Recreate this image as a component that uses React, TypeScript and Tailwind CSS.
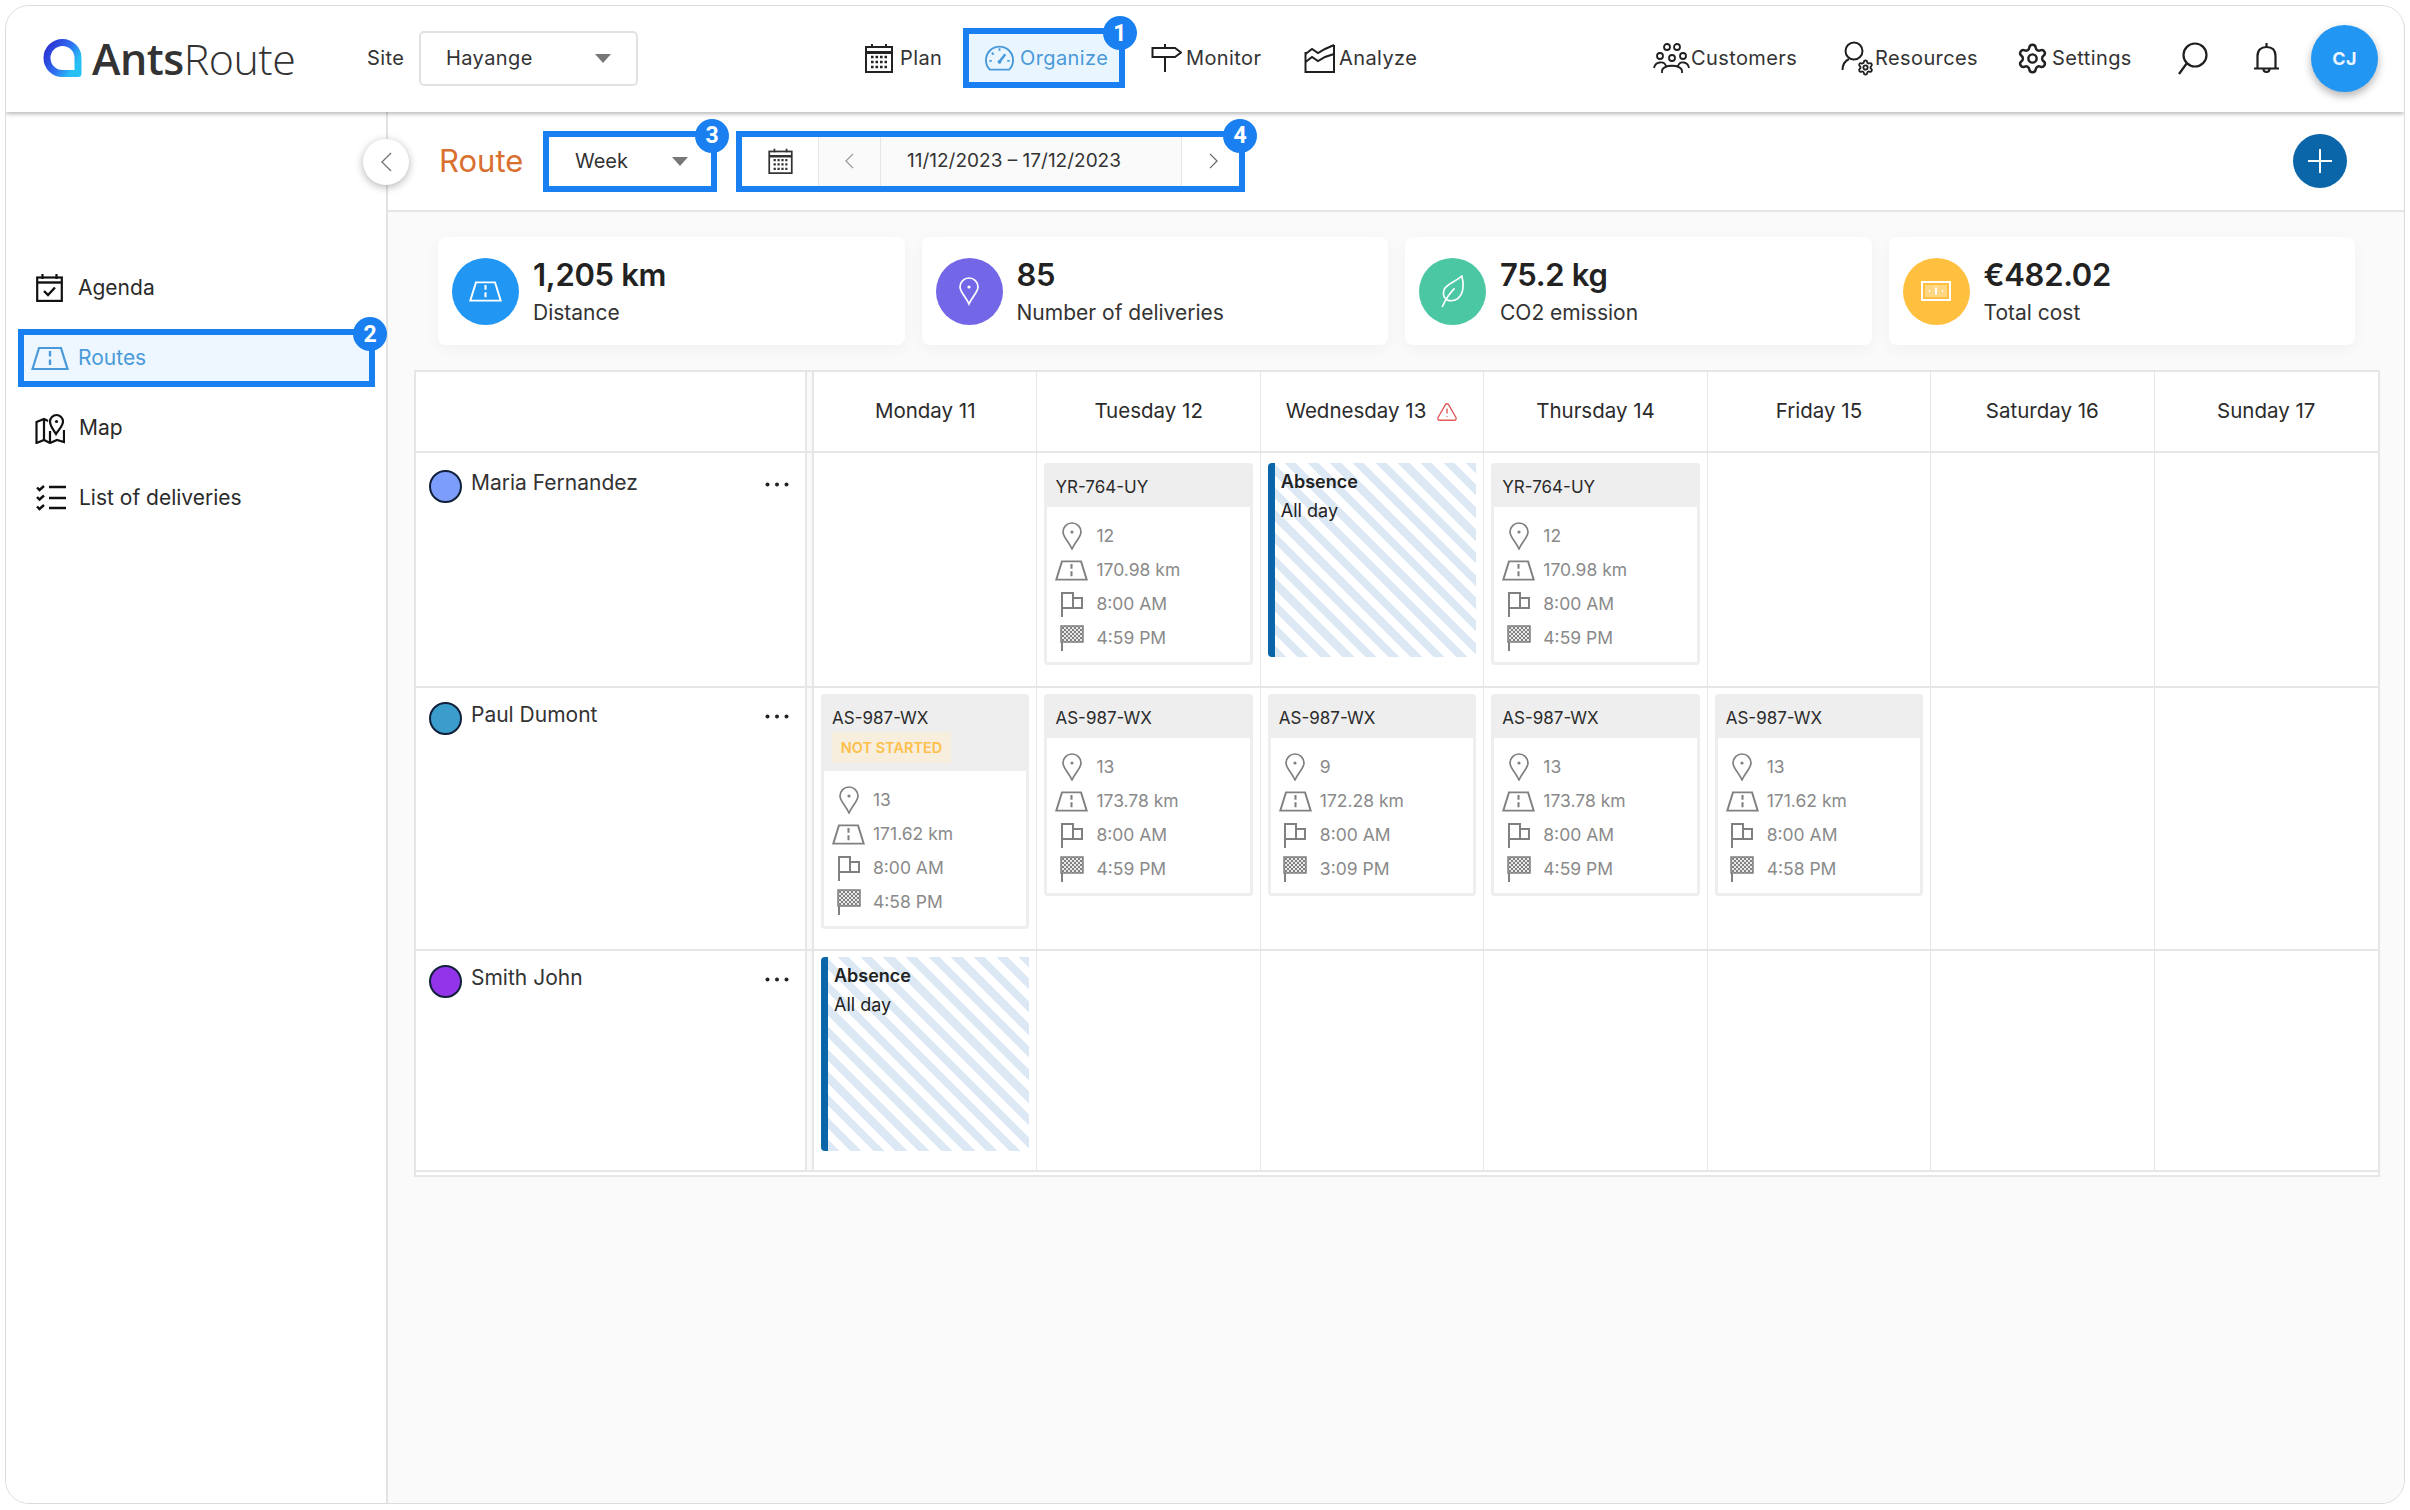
import React from 'react';
import { Settings, TriangleAlert } from 'lucide-react';

// ── small drawn icons ─────────────────────────────────────────────────────────
type IconProps = { className?: string };

const Road = ({ className }: IconProps) => (
  <svg viewBox="0 0 38 24" fill="none" stroke="currentColor" strokeWidth="2.2" className={className}>
    <path d="M1.5 22.5 L8 1.5 H30 L36.5 22.5 Z" />
    <path d="M19 4.5 V10 M19 13 V18.5" strokeWidth="2.4" />
  </svg>
);

const Pin = ({ className }: IconProps) => (
  <svg viewBox="0 0 20 28" fill="none" stroke="currentColor" strokeWidth="1.7" className={className}>
    <path d="M10 27 C7 20 1 15 1 10 A9 9 0 0 1 19 10 C19 15 13 20 10 27 Z" />
    <circle cx="10" cy="10" r="1.6" fill="currentColor" stroke="none" />
  </svg>
);

const StartFlag = ({ className }: IconProps) => (
  <svg viewBox="0 0 24 26" fill="none" stroke="currentColor" strokeWidth="2" className={className}>
    <path d="M2 26 V2 H13 V17 H2" />
    <path d="M13 7 H22 V17 H13" />
  </svg>
);

const FinishFlag = ({ className }: IconProps) => (
  <svg viewBox="0 0 24 26" className={className}>
    <defs>
      <pattern id="chk" width="4" height="4" patternUnits="userSpaceOnUse">
        <rect width="4" height="4" fill="#e9e9e9" />
        <rect width="2" height="2" fill="#808080" />
        <rect x="2" y="2" width="2" height="2" fill="#808080" />
      </pattern>
    </defs>
    <path d="M2 26 V1" stroke="currentColor" strokeWidth="2" />
    <rect x="1" y="1" width="22" height="16" fill="url(#chk)" stroke="currentColor" strokeWidth="1.5" />
  </svg>
);

const CalendarGrid = ({ className }: IconProps) => (
  <svg viewBox="0 0 28 30" fill="none" stroke="currentColor" strokeWidth="2" className={className}>
    <rect x="1" y="4" width="26" height="25" />
    <path d="M1 9.5 H27" strokeWidth="3" />
    <path d="M7 1 V5 M21 1 V5" />
    <path d="M6 14 H22 M6 19 H22 M6 24 H22" strokeWidth="2.6" strokeDasharray="2.6 1.9" />
  </svg>
);

const Gauge = ({ className }: IconProps) => (
  <svg viewBox="0 0 30 30" fill="none" stroke="currentColor" strokeWidth="2" className={className}>
    <path d="M5 27 A14 14 0 1 1 25 27 Z" />
    <path d="M15 19 L21 11" strokeWidth="2.6" />
    <circle cx="15" cy="19" r="2" fill="currentColor" stroke="none" />
    <path d="M15 5 V7.5 M7 9.5 L9 11.5 M4.5 18 H7 M25.5 18 H23" />
  </svg>
);

const Signpost = ({ className }: IconProps) => (
  <svg viewBox="0 0 31 28" fill="none" stroke="#1f1f1f" strokeWidth="2" className={className}>
    <path d="M1.5 4 H24 L30 8.5 L24 13 H1.5 Z" />
    <path d="M14 0 V4 M14 13 V28" />
  </svg>
);

const ChartBox = ({ className }: IconProps) => (
  <svg viewBox="0 0 31 30" fill="none" stroke="#1f1f1f" strokeWidth="2" className={className}>
    <path d="M1.5 9 V29 H30 V2" />
    <path d="M1.5 11 L8 6 L14 10 L21 6 L30 2" />
    <path d="M1.5 19 L8 14 L14 18 L21 14 L30 11" />
  </svg>
);

const People = ({ className }: IconProps) => (
  <svg viewBox="0 0 37 30" fill="none" stroke="#1f1f1f" strokeWidth="1.8" className={className}>
    <circle cx="14" cy="4" r="3" />
    <circle cx="24" cy="4" r="3" />
    <circle cx="7" cy="13" r="3" />
    <circle cx="19" cy="15" r="3" />
    <circle cx="30" cy="13" r="3" />
    <path d="M1 25 C2 19 11 17 13 23 M9 30 V28 C9 21 29 21 29 28 V30 M25 23 C27 17 35 19 36 25" />
  </svg>
);

const Person = ({ className }: IconProps) => (
  <svg viewBox="0 0 26 30" fill="none" stroke="#1f1f1f" strokeWidth="2" className={className}>
    <circle cx="13" cy="10" r="8.5" />
    <path d="M8 18 C4 20 1.5 24 1.5 29" />
  </svg>
);

const Loupe = ({ className }: IconProps) => (
  <svg viewBox="0 0 30 33" fill="none" stroke="#1f1f1f" strokeWidth="2.2" className={className}>
    <circle cx="17" cy="13" r="11.5" />
    <path d="M9 21 L1 32" />
  </svg>
);

const BellLine = ({ className }: IconProps) => (
  <svg viewBox="0 0 27 33" fill="none" stroke="#1f1f1f" strokeWidth="2.2" className={className}>
    <path d="M4.5 26 V14 C4.5 8 8 5 13.5 5 C19 5 22.5 8 22.5 14 V26 M1 26.5 H26" />
    <path d="M13.5 1 V5" />
    <path d="M10.5 27 A3 3 0 0 0 16.5 27" />
  </svg>
);

const AgendaIcon = ({ className }: IconProps) => (
  <svg viewBox="0 0 27 28" fill="none" stroke="#111" strokeWidth="2.2" className={className}>
    <rect x="1.2" y="3.5" width="24.6" height="23.4" />
    <path d="M1 8.5 H26" strokeWidth="2.4" />
    <path d="M6.5 0 V5 M20.5 0 V5" />
    <path d="M8 17 L12 21 L19 13.5" strokeWidth="2.4" />
  </svg>
);

const MapIcon = ({ className }: IconProps) => (
  <svg viewBox="0 0 30 31" fill="none" stroke="#111" strokeWidth="2.2" className={className}>
    <path d="M13 8 L9 6 L1.5 9 V30 L9 27 L15 30 L22 27 L29 29 V17" />
    <path d="M9 6 V27 M15 18 V30" />
    <path d="M21 21 C18 16 15 13 15 8.5 A6.5 6.5 0 0 1 28 8.5 C28 13 24 16 21 21 Z" />
    <circle cx="21.5" cy="8.5" r="1.6" fill="#111" stroke="none" />
  </svg>
);

const ChecklistIcon = ({ className }: IconProps) => (
  <svg viewBox="0 0 30 26" fill="none" stroke="#111" strokeWidth="2.4" className={className}>
    <path d="M1 2.5 L3.5 5 L8 1 M1 12 L3.5 14.5 L8 10.5 M1 21.5 L3.5 24 L8 20" />
    <path d="M13 2 H30 M13 13 H30 M13 23 H30" />
  </svg>
);

const Leaf = ({ className }: IconProps) => (
  <svg viewBox="0 0 24 32" fill="none" stroke="#fff" strokeWidth="1.6" className={className}>
    <path d="M21 1 C24 12 22 24 11 25 C4 25 2 19 4 14 C7 8 15 7 21 1 Z" />
    <path d="M2 31 C5 24 9 18 14 13" />
  </svg>
);

const Banknote = ({ className }: IconProps) => (
  <svg viewBox="0 0 30 20" fill="none" stroke="#fff" strokeWidth="2" className={className}>
    <rect x="1" y="1" width="28" height="18" />
    <rect x="4" y="4" width="22" height="12" fill="#fff" fillOpacity="0.35" strokeWidth="0" />
    <path d="M15 6.5 V13.5" strokeWidth="2" />
    <path d="M8 10 H9 M21 10 H22" />
  </svg>
);

const Caret = () => (
  <span className="h-0 w-0 border-x-[8px] border-t-[9px] border-x-transparent border-t-[#777]" />
);

const Badge = ({ n }: { n: number }) => (
  <span className="absolute -right-[18px] -top-[18px] flex h-[34px] w-[34px] items-center justify-center rounded-full bg-[#1a7ff0] font-['Roboto'] text-[23px] font-bold leading-none text-white">
    {n}
  </span>
);

const Logo = () => (
  <svg viewBox="0 0 39 38" className="h-[38px] w-[39px] shrink-0" fill="none">
    <defs>
      <linearGradient id="logo" x1="0" y1="0" x2="1" y2="0.6">
        <stop offset="0" stopColor="#2b2bd0" />
        <stop offset="0.6" stopColor="#2f6ff0" />
        <stop offset="1" stopColor="#27c0f5" />
      </linearGradient>
    </defs>
    <path d="M35 34.5 H19.5 A15.5 15.5 0 1 1 35 19 Z" stroke="url(#logo)" strokeWidth="7" strokeLinejoin="round" />
  </svg>
);

// ── top bar ───────────────────────────────────────────────────────────────────
const TopBar = () => (
  <header className="relative z-10 flex h-[106px] shrink-0 items-center bg-white pb-[2px] text-[20px] tracking-[0.4px] text-[#333] shadow-[0_2px_4px_rgba(0,0,0,0.28)]">
    <div className="ml-[37px] flex w-[250px] shrink-0 items-center gap-[10px]">
      <Logo />
      <span className="font-['Open_Sans'] text-[43px] leading-none tracking-[-0.5px] text-[#333]">
        <span className="font-semibold">Ants</span>
        <span className="font-light">Route</span>
      </span>
    </div>
    <span className="ml-[74px] w-[38px]">Site</span>
    <div className="ml-[14px] flex h-[55px] w-[219px] items-center justify-between rounded-[5px] border-2 border-[#e2e2e2] pl-[25px] pr-[25px]">
      <span>Hayange</span>
      <Caret />
    </div>

    <div className="ml-[227px] flex w-[78px] items-center gap-[7px]">
      <CalendarGrid className="h-[30px] w-[28px] shrink-0 text-[#222]" />
      <span>Plan</span>
    </div>
    <div className="relative ml-[20px] flex h-[60px] w-[162px] items-center gap-[6px] border-[6px] border-[#1a7ff0] bg-[#eaf6ff] pl-[16px] text-[#4a9ad9]">
      <Gauge className="h-[30px] w-[29px] shrink-0" />
      <span>Organize</span>
      <Badge n={1} />
    </div>
    <div className="ml-[26px] flex w-[113px] items-center gap-[4px]">
      <Signpost className="h-[28px] w-[31px] shrink-0" />
      <span>Monitor</span>
    </div>
    <div className="ml-[40px] flex w-[113px] items-center gap-[4px]">
      <ChartBox className="h-[30px] w-[31px] shrink-0" />
      <span>Analyze</span>
    </div>

    <div className="ml-[236px] flex w-[146px] items-center gap-[1px]">
      <People className="h-[30px] w-[37px] shrink-0" />
      <span>Customers</span>
    </div>
    <div className="ml-[42px] flex w-[136px] items-center gap-[1px]">
      <span className="relative h-[35px] w-[33px] shrink-0">
        <Person className="h-[30px] w-[26px]" />
        <Settings className="absolute bottom-0 right-0 h-[17px] w-[17px] text-[#1f1f1f]" strokeWidth={2.6} />
      </span>
      <span>Resources</span>
    </div>
    <div className="ml-[39px] flex w-[119px] items-center gap-[3px]">
      <Settings className="h-[33px] w-[33px] shrink-0 text-[#222]" strokeWidth={1.8} />
      <span>Settings</span>
    </div>
    <Loupe className="ml-[43px] h-[33px] w-[30px] shrink-0" />
    <BellLine className="ml-[45px] h-[33px] w-[27px] shrink-0" />
    <div className="ml-[31px] flex h-[67px] w-[67px] shrink-0 items-center justify-center rounded-full bg-[#2196f3] text-[18px] font-bold text-[#e8f4ff] shadow-[0_4px_8px_rgba(0,0,0,0.3)]">
      CJ
    </div>
  </header>
);

// ── left menu ─────────────────────────────────────────────────────────────────
const SideMenu = () => (
  <aside className="relative flex w-[382px] shrink-0 flex-col border-r-2 border-[#e3e3e3] bg-white pt-[141px] text-[21px] text-[#2b2b2b]">
    <div className="flex h-[70px] items-center gap-[15px] pl-[30px]">
      <AgendaIcon className="h-[28px] w-[27px]" />
      <span>Agenda</span>
    </div>
    <div className="relative ml-[12px] mt-[6px] flex h-[58px] w-[357px] items-center gap-[4px] border-[6px] border-[#1a7ff0] bg-[#eef7ff] pl-[7px] text-[#4a9ad9]">
      <Road className="h-[25px] w-[38px] shrink-0" />
      <span className="ml-[5px]">Routes</span>
      <Badge n={2} />
    </div>
    <div className="mt-[6px] flex h-[70px] items-center gap-[14px] pl-[29px]">
      <MapIcon className="h-[31px] w-[30px]" />
      <span>Map</span>
    </div>
    <div className="flex h-[70px] items-center gap-[13px] pl-[30px]">
      <ChecklistIcon className="h-[26px] w-[30px]" />
      <span>List of deliveries</span>
    </div>
  </aside>
);

// ── toolbar under the top bar ─────────────────────────────────────────────────
const Toolbar = () => (
  <div className="relative flex h-[100px] shrink-0 items-center border-b-2 border-[#e6e6e6] bg-white pl-[51px] text-[20px] text-[#333]">
    <button className="absolute -left-[25px] top-[27px] flex h-[46px] w-[46px] items-center justify-center rounded-full bg-white shadow-[0_2px_8px_rgba(0,0,0,0.3)]">
      <svg viewBox="0 0 12 22" className="h-[20px] w-[11px]" fill="none" stroke="#777" strokeWidth="1.5">
        <path d="M11 1 L1 11 L11 21" />
      </svg>
    </button>
    <span className="w-[104px] text-[31px] text-[#d9702f]">Route</span>
    <div className="relative flex h-[61px] w-[174px] items-center justify-between border-[6px] border-[#1a7ff0] pl-[26px] pr-[23px]">
      <span>Week</span>
      <Caret />
      <Badge n={3} />
    </div>
    <div className="relative ml-[19px] flex h-[61px] w-[509px] items-stretch border-[6px] border-[#1a7ff0]">
      <div className="flex w-[77px] items-center justify-center border-r border-[#e6e6e6]">
        <CalendarGrid className="h-[26px] w-[25px] text-[#333]" />
      </div>
      <div className="flex w-[62px] items-center justify-center border-r border-[#e6e6e6] bg-[#fafafa]">
        <svg viewBox="0 0 10 18" className="h-[16px] w-[9px]" fill="none" stroke="#999" strokeWidth="1.4">
          <path d="M9 1 L1 9 L9 17" />
        </svg>
      </div>
      <div className="flex w-[301px] items-center border-r border-[#e6e6e6] bg-[#fafafa] pl-[26px] text-[19px]">
        11/12/2023 – 17/12/2023
      </div>
      <div className="flex flex-1 items-center justify-center pl-[6px]">
        <svg viewBox="0 0 10 18" className="h-[16px] w-[9px]" fill="none" stroke="#666" strokeWidth="1.4">
          <path d="M1 1 L9 9 L1 17" />
        </svg>
      </div>
      <Badge n={4} />
    </div>
    <button className="ml-auto mr-[57px] flex h-[54px] w-[54px] items-center justify-center rounded-full bg-[#0a66a8]">
      <svg viewBox="0 0 26 26" className="h-[26px] w-[26px]" stroke="#fff" strokeWidth="2">
        <path d="M13 1 V25 M1 13 H25" />
      </svg>
    </button>
  </div>
);

// ── stat cards ────────────────────────────────────────────────────────────────
const stats = [
  { value: '1,205 km', label: 'Distance', circle: 'bg-[#2196f3]', icon: <Road className="h-[23px] w-[33px] text-white" /> },
  { value: '85', label: 'Number of deliveries', circle: 'bg-[#7367e8]', icon: <Pin className="h-[32px] w-[20px] text-white" /> },
  { value: '75.2 kg', label: 'CO2 emission', circle: 'bg-[#4cc7a3]', icon: <Leaf className="h-[33px] w-[25px]" /> },
  { value: '€482.02', label: 'Total cost', circle: 'bg-[#ffc040]', icon: <Banknote className="h-[20px] w-[30px]" /> },
];

const StatCards = () => (
  <div className="ml-[50px] mr-[49px] mt-[25px] grid grid-cols-4 gap-[17px]">
    {stats.map((s) => (
      <div key={s.label} className="flex h-[108px] items-center rounded-[8px] bg-white pl-[14px] shadow-[0_4px_16px_rgba(0,0,0,0.04)]">
        <div className={`flex h-[67px] w-[67px] shrink-0 items-center justify-center rounded-full ${s.circle}`}>{s.icon}</div>
        <div className="ml-[14px] flex flex-col">
          <span className="text-[31px] font-semibold leading-[40px] tracking-[-0.3px] text-[#222]">{s.value}</span>
          <span className="mt-[4px] text-[21px] leading-[28px] text-[#333]">{s.label}</span>
        </div>
      </div>
    ))}
  </div>
);

// ── planning table ────────────────────────────────────────────────────────────
type Route = { plate: string; stops: string; km: string; start: string; end: string; notStarted?: boolean };
type Cell = Route | 'absence' | null;

const days = ['Monday 11', 'Tuesday 12', 'Wednesday 13', 'Thursday 14', 'Friday 15', 'Saturday 16', 'Sunday 17'];

const ym = (stops: string, km: string, end: string): Route => ({ plate: 'AS-987-WX', stops, km: `${km} km`, start: '8:00 AM', end });
const yr: Route = { plate: 'YR-764-UY', stops: '12', km: '170.98 km', start: '8:00 AM', end: '4:59 PM' };

const rows: { name: string; dot: string; height: string; pad: string; nameTop: string; cells: Cell[] }[] = [
  {
    name: 'Maria Fernandez',
    dot: 'bg-[#7c9dfa]',
    height: 'h-[235px]',
    pad: 'pt-[10px]',
    nameTop: 'pt-[17px]',
    cells: [null, yr, 'absence', yr, null, null, null],
  },
  {
    name: 'Paul Dumont',
    dot: 'bg-[#3a9dcb]',
    height: 'h-[263px]',
    pad: 'pt-[6px]',
    nameTop: 'pt-[14px]',
    cells: [
      { ...ym('13', '171.62', '4:58 PM'), notStarted: true },
      ym('13', '173.78', '4:59 PM'),
      ym('9', '172.28', '3:09 PM'),
      ym('13', '173.78', '4:59 PM'),
      ym('13', '171.62', '4:58 PM'),
      null,
      null,
    ],
  },
  {
    name: 'Smith John',
    dot: 'bg-[#9333ea]',
    height: 'h-[221px]',
    pad: 'pt-[6px]',
    nameTop: 'pt-[14px]',
    cells: ['absence', null, null, null, null, null, null],
  },
];

const DetailLine = ({ icon, text }: { icon: React.ReactNode; text: string }) => (
  <div className="flex h-[34px] items-center gap-[8px]">
    <span className="flex w-[33px] shrink-0 items-center justify-center text-[#808080]">{icon}</span>
    <span>{text}</span>
  </div>
);

const RouteCard = ({ route }: { route: Route }) => (
  <div className="rounded-[4px] border-[3px] border-t-0 border-[#eeeeee] bg-white">
    <div className="-mx-[3px] rounded-t-[4px] bg-[#eeeeee] px-[11px] pb-[8px] pt-[12px] text-[17px] leading-[24px] text-[#2b2b2b]">
      {route.plate}
      {route.notStarted && (
        <div className="mt-[2px] flex h-[31px] w-[119px] items-center justify-center bg-[#f8eedd] text-[14.5px] font-semibold text-[#fdc04a]">
          NOT STARTED
        </div>
      )}
    </div>
    <div className="px-[8px] pb-[7px] pt-[12px] text-[17.5px] text-[#8a8a8a]">
      <DetailLine icon={<Pin className="h-[28px] w-[20px]" />} text={route.stops} />
      <DetailLine icon={<Road className="h-[21px] w-[33px]" />} text={route.km} />
      <DetailLine icon={<StartFlag className="h-[26px] w-[24px]" />} text={route.start} />
      <DetailLine icon={<FinishFlag className="h-[26px] w-[24px]" />} text={route.end} />
    </div>
  </div>
);

const AbsenceCard = () => (
  <div className="h-[194px] rounded-l-[4px] border-l-[7px] border-[#0a66a8] bg-[repeating-linear-gradient(45deg,#dce9f4,#dce9f4_8px,#ffffff_8px,#ffffff_16px)] pl-[6px] pt-[4px] text-[18px] leading-[29px] text-[#222]">
    <div className="font-semibold">Absence</div>
    <div>All day</div>
  </div>
);

const Planning = () => (
  <div className="ml-[26px] mr-[24px] mt-[25px] border-2 border-[#e6e6e6] bg-white">
    <div className="flex h-[81px] border-b-2 border-[#e6e6e6] text-[20.5px] text-[#2b2b2b]">
      <div className="w-[391px] shrink-0 border-r-2 border-[#e6e6e6]" />
      <div className="w-[5px] shrink-0 bg-[#fafafa]" />
      <div className="grid flex-1 grid-cols-7 border-l-2 border-[#e6e6e6]">
        {days.map((d) => (
          <div key={d} className="flex items-center justify-center gap-[10px] border-r border-[#e6e6e6] last:border-r-0">
            <span>{d}</span>
            {d === 'Wednesday 13' && <TriangleAlert className="h-[22px] w-[22px] text-[#e0595b]" strokeWidth={1.5} />}
          </div>
        ))}
      </div>
    </div>
    {rows.map((row) => (
      <div key={row.name} className={`flex border-b-2 border-[#e6e6e6] ${row.height}`}>
        <div className={`flex w-[391px] shrink-0 items-start border-r-2 border-[#e6e6e6] pl-[13px] ${row.nameTop}`}>
          <span className={`h-[33px] w-[33px] shrink-0 rounded-full border-2 border-[#10203a] ${row.dot}`} />
          <span className="ml-[9px] text-[21px] leading-[26px] text-[#333]">{row.name}</span>
          <svg viewBox="0 0 24 5" className="ml-auto mr-[16px] mt-[12px] h-[5px] w-[24px]" fill="#222">
            <circle cx="2.5" cy="2.5" r="2" />
            <circle cx="12" cy="2.5" r="2" />
            <circle cx="21.5" cy="2.5" r="2" />
          </svg>
        </div>
        <div className="w-[5px] shrink-0 bg-[#fafafa]" />
        <div className="grid flex-1 grid-cols-7 border-l-2 border-[#e6e6e6]">
          {row.cells.map((cell, i) => (
            <div key={i} className={`border-r border-[#e6e6e6] px-[7px] last:border-r-0 ${row.pad}`}>
              {cell === 'absence' ? <AbsenceCard /> : cell ? <RouteCard route={cell} /> : null}
            </div>
          ))}
        </div>
      </div>
    ))}
    <div className="h-[3px]" />
  </div>
);

export default function App() {
  return (
    <div className="h-[1510px] w-[2410px] bg-white p-[5px] pb-[6px] font-['Inter',sans-serif]">
      <div className="flex h-full flex-col overflow-hidden rounded-[24px] border border-[#dcdcdc]">
        <TopBar />
        <div className="flex min-h-0 flex-1">
          <SideMenu />
          <main className="flex min-w-0 flex-1 flex-col bg-[#fafafa]">
            <Toolbar />
            <StatCards />
            <Planning />
          </main>
        </div>
      </div>
    </div>
  );
}
